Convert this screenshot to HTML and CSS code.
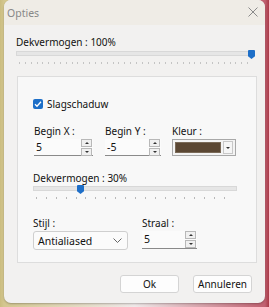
FILE: index.html
```html
<!DOCTYPE html>
<html>
<head>
<meta charset="utf-8">
<link rel="stylesheet" href="styles.css">
</head>
<body>
<div class="window">
  <div class="titlebar">
    <span class="title">Opties</span>
    <svg class="close" width="10" height="10" viewBox="0 0 10 10"><path d="M0.5 0.5 L9.5 9.5 M9.5 0.5 L0.5 9.5" stroke="#8a8a8a" stroke-width="1" fill="none"/></svg>
  </div>
  <div class="content">
    <div class="label">Dekvermogen : 100%</div>
    <div class="slider wide">
      <div class="track"></div>
      <div class="thumb" style="left: 232px"></div>
      <div class="ticks"></div>
    </div>
    <div class="group">
      <label class="check">
        <span class="box"><svg width="8" height="8" viewBox="0 0 8 8"><path d="M1 4.2 L3 6.2 L7 1.8" stroke="#fff" stroke-width="1.3" fill="none"/></svg></span>
        <span>Slagschaduw</span>
      </label>
      <div class="row3">
        <div class="field fx">
          <div class="label">Begin X :</div>
          <div class="spin"><span class="val">5</span><span class="btns"><i class="up"></i><i class="dn"></i></span></div>
        </div>
        <div class="field fy">
          <div class="label">Begin Y :</div>
          <div class="spin"><span class="val">-5</span><span class="btns"><i class="up"></i><i class="dn"></i></span></div>
        </div>
        <div class="field fc">
          <div class="label">Kleur :</div>
          <div class="color"><span class="swatch"></span><span class="drop"><i class="dn"></i></span></div>
        </div>
      </div>
      <div class="label op">Dekvermogen : 30%</div>
      <div class="slider narrow">
        <div class="track"></div>
        <div class="thumb" style="left: 44px"></div>
        <div class="ticks"></div>
      </div>
      <div class="row2">
        <div class="field fs">
          <div class="label">Stijl :</div>
          <div class="select"><span>Antialiased</span><svg width="9" height="5" viewBox="0 0 9 5"><path d="M0.5 0.5 L4.5 4.5 L8.5 0.5" stroke="#666" stroke-width="1" fill="none"/></svg></div>
        </div>
        <div class="field fr">
          <div class="label">Straal :</div>
          <div class="spin"><span class="val">5</span><span class="btns"><i class="up"></i><i class="dn"></i></span></div>
        </div>
      </div>
    </div>
    <div class="buttons">
      <button class="btn ok">Ok</button>
      <button class="btn cancel">Annuleren</button>
    </div>
  </div>
</div>
</body>
</html>
```
FILE: styles.css
```css
html, body {
  margin: 0;
  padding: 0;
}
body {
  width: 269px;
  height: 307px;
  overflow: hidden;
  background: linear-gradient(90deg, #cbbd80 0px, #d4c78f 4px, #efe9e9 50%, #c06070 265px, #a83a48 269px);
  font-family: "Noto Sans", "Open Sans", sans-serif;
  font-size: 10px;
  color: #111;
}
.window {
  margin-left: 4px;
  width: 261px;
  height: 303px;
  background: #f2f1f0;
  border-radius: 7px;
  box-shadow: 0 1px 2px rgba(0,0,0,0.25);
  overflow: hidden;
}
.titlebar {
  height: 25px;
  display: flex;
  align-items: center;
  justify-content: space-between;
  padding: 0 7px 0 3px;
  background: #efece6;
}
.title {
  color: #888;
  font-size: 10.5px;
}
.close {
  display: block;
  margin-top: -1px;
}
.content {
  padding: 10px 12px 0 12px;
}
.label {
  line-height: 15px;
  height: 15px;
  white-space: nowrap;
}
.slider {
  position: relative;
  height: 17px;
}
.slider .track {
  position: absolute;
  left: 0;
  right: 0;
  top: 1px;
  height: 5px;
  background: #e6e6e6;
  border: 1px solid #d8d8d8;
  box-sizing: border-box;
}
.slider .thumb {
  position: absolute;
  top: 0;
  width: 7px;
  height: 9px;
  background: #1e6fc8;
  border-radius: 1px 1px 0 0;
  clip-path: polygon(0 0, 100% 0, 100% 70%, 50% 100%, 0 70%);
}
.slider .ticks {
  position: absolute;
  left: 3px;
  right: 3px;
  top: 12px;
  height: 2px;
  background: repeating-linear-gradient(90deg, #c4c4c4 0 1px, transparent 1px 5.85px);
}
.slider.wide {
  width: 239px;
}
.slider.narrow {
  width: 204px;
  margin-top: -1px;
}
.slider.narrow .ticks {
  background: repeating-linear-gradient(90deg, #b8b8b8 0 1px, transparent 1px 9.9px);
}
.group {
  margin: 9px 0 0 1px;
  width: 240px;
  height: 187px;
  box-sizing: border-box;
  border: 1px solid #dddddd;
  background: #f8f8f8;
  padding: 21px 0 0 15px;
}
.check {
  display: flex;
  align-items: center;
  gap: 4px;
  height: 11px;
}
.check .box {
  width: 10px;
  height: 10px;
  background: #1e6fc8;
  border-radius: 2px;
  display: flex;
  align-items: center;
  justify-content: center;
}
.check .box svg {
  display: block;
}
.row3 {
  display: flex;
  margin-top: 15px;
}
.row2 {
  display: flex;
  margin-top: 14px;
}
.field {
  display: flex;
  flex-direction: column;
}
.fx { width: 59px; margin-left: 1px; }
.fy { width: 56px; margin-left: 12px; }
.fc { width: 64px; margin-left: 11px; }
.fs { width: 95px; }
.fr { width: 55px; margin-left: 14px; }
.spin {
  display: flex;
  align-items: center;
  justify-content: space-between;
  height: 17px;
  background: #fbfbfb;
  border-bottom: 1px solid #8a8a8a;
  box-sizing: border-box;
  padding: 0 1px 0 2px;
  font-size: 10.5px;
}
.spin .val {
  line-height: 15px;
}
.btns {
  display: flex;
  flex-direction: column;
  gap: 1px;
}
.btns i, .drop i {
  display: flex;
  align-items: center;
  justify-content: center;
  width: 9px;
  height: 6px;
  background: #f0f0f0;
  border: 1px solid #b8b8b8;
  box-sizing: content-box;
  position: relative;
}
.btns i::after, .drop i::after {
  content: "";
  border-left: 2px solid transparent;
  border-right: 2px solid transparent;
}
.btns i.up::after {
  border-bottom: 2px solid #333;
}
.btns i.dn::after, .drop i.dn::after {
  border-top: 2px solid #333;
}
.color {
  display: flex;
  height: 17px;
  box-sizing: border-box;
  border: 1px solid #a8a8a8;
  background: #f4f4f4;
  padding: 2px;
  gap: 2px;
}
.swatch {
  flex: 1;
  background: #5b4733;
  border: 1px solid #7a6a58;
}
.drop {
  display: flex;
  align-items: center;
}
.drop i {
  height: 11px;
  width: 8px;
  border-color: #c8c8c8;
  background: #f6f6f6;
}
.select {
  display: flex;
  align-items: center;
  justify-content: space-between;
  height: 19px;
  box-sizing: border-box;
  border: 1px solid #cfcfcf;
  border-radius: 3px;
  background: #fbfbfb;
  padding: 0 5px 0 4px;
  font-size: 10.5px;
}
.select svg { display: block; }
.fr .spin { height: 18px; }
.buttons {
  display: flex;
  justify-content: flex-end;
  gap: 14px;
  margin-top: 12px;
  padding-right: 1px;
}
.btn {
  font-family: inherit;
  font-size: 10px;
  color: #111;
  width: 59px;
  height: 18px;
  padding: 0;
  line-height: 16px;
  background: #fdfdfd;
  border: 1px solid #d4d4d4;
  border-radius: 3px;
}
.op { margin-top: 15px; }
```
